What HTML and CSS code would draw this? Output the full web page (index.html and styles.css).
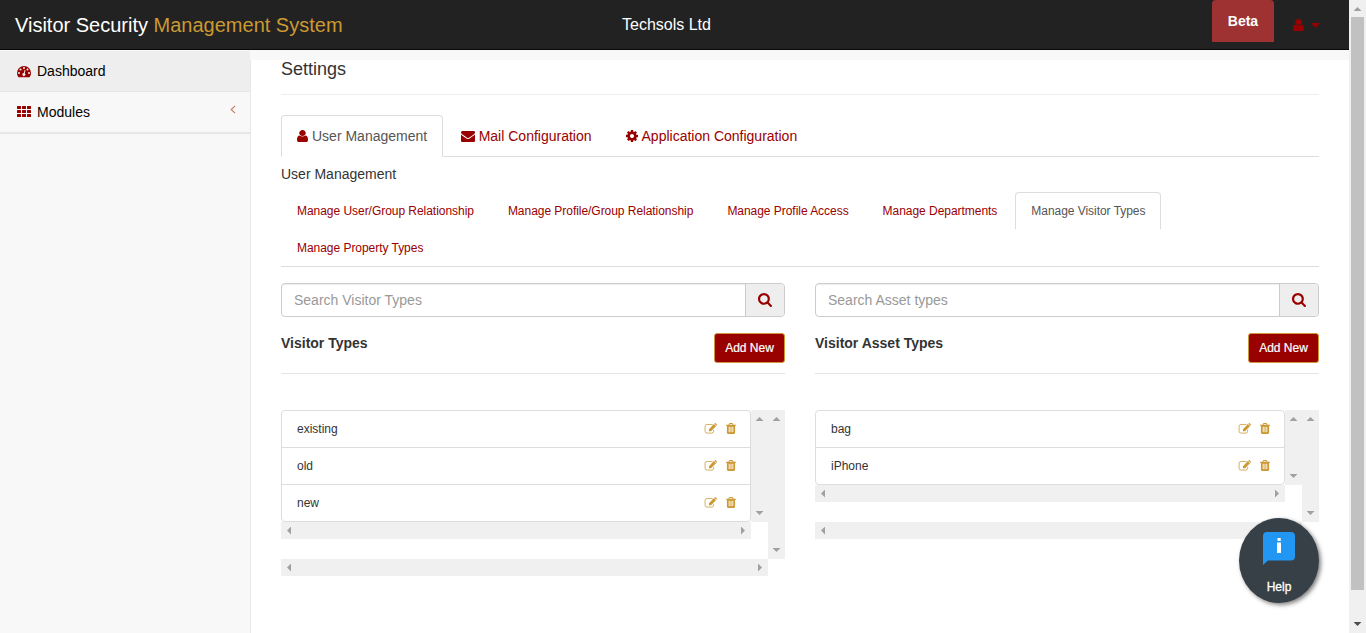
FILE: index.html
```html
<!DOCTYPE html>
<html lang="en">
<head>
<meta charset="utf-8">
<title>Visitor Security Management System</title>
<link rel="stylesheet" href="styles.css">
</head>
<body>
<svg class="defs" aria-hidden="true">
  <symbol id="user" viewBox="256 0 1280 1792" preserveAspectRatio="none"><path d="M1536 1399q0 109-62.5 187t-150.5 78h-854q-88 0-150.5-78t-62.5-187q0-85 8.5-160.5t31.5-152 58.5-131 94-89 134.5-34.5q131 128 313 128t313-128q76 0 134.5 34.5t94 89 58.5 131 31.5 152 8.5 160.5zm-256-887q0 159-112.5 271.5t-271.5 112.5-271.5-112.5-112.5-271.5 112.5-271.5 271.5-112.5 271.5 112.5 112.5 271.5z"/></symbol>
  <symbol id="cog" viewBox="128 0 1536 1792"><path d="M1152 896q0-106-75-181t-181-75-181 75-75 181 75 181 181 75 181-75 75-181zm512-109v222q0 12-8 23t-20 13l-185 28q-19 54-39 91 35 50 107 138 10 12 10 25t-9 23q-27 37-99 108t-94 71q-12 0-26-9l-138-108q-44 23-91 38-16 136-29 186-7 28-36 28h-222q-14 0-24.5-8.5t-11.5-21.5l-28-184q-49-16-90-37l-141 107q-10 9-25 9-14 0-25-11-126-114-165-168-7-10-7-23 0-12 8-23 15-21 51-66.5t54-70.5q-27-50-41-99l-183-27q-13-2-21-12.5t-8-23.5v-222q0-12 8-23t19-13l186-28q14-46 39-92-40-57-107-138-10-12-10-24 0-10 9-23 26-36 98.5-107.5t94.5-71.5q13 0 26 10l138 107q44-23 91-38 16-136 29-186 7-28 36-28h222q14 0 24.5 8.5t11.5 21.5l28 184q49 16 90 37l142-107q9-9 24-9 13 0 25 10 129 119 165 170 7 8 7 22 0 12-8 23-15 21-51 66.5t-54 70.5q26 50 41 98l183 28q13 2 21 12.5t8 23.5z"/></symbol>
  <symbol id="mail" viewBox="0 0 1792 1792"><path d="M1792 710v794q0 66-47 113t-113 47h-1472q-66 0-113-47t-47-113v-794q44 49 101 87 362 246 497 345 57 42 92.5 65.5t94.5 48 110 24.5h2q51 0 110-24.5t94.5-48 92.5-65.5q170-123 498-345 57-39 100-87zm0-294q0 79-49 151t-122 123q-376 261-468 325-10 7-42.5 31t-54 38.5-52 32.5-57.5 27-50 9h-2q-23 0-50-9t-57.5-27-52-32.5-54-38.5-42.5-31q-91-64-262-182.5t-205-142.5q-62-42-117-115.5t-55-136.5q0-78 41.5-130t118.5-52h1472q65 0 112.5 47t47.5 113z"/></symbol>
  <symbol id="search" viewBox="64 128 1664 1664"><path d="M1216 832q0-185-131.5-316.5t-316.5-131.5-316.5 131.5-131.5 316.5 131.5 316.5 316.5 131.5 316.5-131.5 131.5-316.5zm512 832q0 52-38 90t-90 38q-54 0-90-38l-343-342q-179 124-399 124-143 0-273.5-55.5t-225-150-150-225-55.5-273.5 55.5-273.5 150-225 225-150 273.5-55.5 273.5 55.5 225 150 150 225 55.5 273.5q0 220-124 399l343 343q37 37 37 90z"/></symbol>
  <symbol id="trash" viewBox="192 128 1408 1536" preserveAspectRatio="none"><path d="M704 1376v-704q0-14-9-23t-23-9h-64q-14 0-23 9t-9 23v704q0 14 9 23t23 9h64q14 0 23-9t9-23zm256 0v-704q0-14-9-23t-23-9h-64q-14 0-23 9t-9 23v704q0 14 9 23t23 9h64q14 0 23-9t9-23zm256 0v-704q0-14-9-23t-23-9h-64q-14 0-23 9t-9 23v704q0 14 9 23t23 9h64q14 0 23-9t9-23zm-544-992h448l-48-117q-7-9-17-11h-317q-10 2-17 11zm928 32v64q0 14-9 23t-23 9h-96v948q0 83-47 143.5t-113 60.5h-832q-66 0-113-58.5t-47-141.5v-952h-96q-14 0-23-9t-9-23v-64q0-14 9-23t23-9h309l70-167q15-37 54-63t79-26h320q40 0 79 26t54 63l70 167h309q14 0 23 9t9 23z"/></symbol>
  <symbol id="edit" viewBox="0 0 14 12"><path d="M9.2 1.6H3.2Q1.1 1.6 1.1 3.6V9Q1.1 11 3.2 11H8.3Q10.4 11 10.4 9V7.5" fill="none" stroke="currentColor" stroke-width=".85"/><path d="M5.3 9V6.7L10.7 1.2L13 3.5L7.6 9zM11.2.8L11.7.3Q12.2-.1 12.7.3L13.9 1.5Q14.2 2 13.9 2.5L13.4 3z"/></symbol>
  <symbol id="gauge" viewBox="0 0 14 12"><path fill-rule="evenodd" d="M0 7A7 7 0 0 1 14 7Q14 9 12.9 10.8Q12.7 11.2 12.3 11.2H1.7Q1.3 11.2 1.1 10.8Q0 9 0 7zM2 6.1a1 1 0 1 0 0 2a1 1 0 1 0 0-2M3.5 2.6a1 1 0 1 0 0 2a1 1 0 1 0 0-2M7 1a1 1 0 1 0 0 2a1 1 0 1 0 0-2M10.5 2.6a1 1 0 1 0 0 2a1 1 0 1 0 0-2M12 6.1a1 1 0 1 0 0 2a1 1 0 1 0 0-2M7.6 3.9L6.8 7A1.5 1.5 0 1 0 7.8 7.3L8.5 4.2z"/></symbol>
  <symbol id="grid" viewBox="0 0 14 11"><path d="M.5 0h3q.5 0 .5.5v2q0 .5-.5.5h-3q-.5 0-.5-.5v-2q0-.5.5-.5zM5.5 0h3q.5 0 .5.5v2q0 .5-.5.5h-3q-.5 0-.5-.5v-2q0-.5.5-.5zM10.5 0h3q.5 0 .5.5v2q0 .5-.5.5h-3q-.5 0-.5-.5v-2q0-.5.5-.5zM.5 4h3q.5 0 .5.5v2q0 .5-.5.5h-3q-.5 0-.5-.5v-2q0-.5.5-.5zM5.5 4h3q.5 0 .5.5v2q0 .5-.5.5h-3q-.5 0-.5-.5v-2q0-.5.5-.5zM10.5 4h3q.5 0 .5.5v2q0 .5-.5.5h-3q-.5 0-.5-.5v-2q0-.5.5-.5zM.5 8h3q.5 0 .5.5v2q0 .5-.5.5h-3q-.5 0-.5-.5v-2q0-.5.5-.5zM5.5 8h3q.5 0 .5.5v2q0 .5-.5.5h-3q-.5 0-.5-.5v-2q0-.5.5-.5zM10.5 8h3q.5 0 .5.5v2q0 .5-.5.5h-3q-.5 0-.5-.5v-2q0-.5.5-.5z"/></symbol>
</svg>
<div class="window">
  <div class="page">
    <header class="navbar">
      <a class="brand">Visitor Security <span>Management System</span></a>
      <div class="company">Techsols Ltd</div>
      <div class="nav-right">
        <span class="beta">Beta</span>
        <a class="account"><svg class="user-icon"><use href="#user"/></svg><i class="caret"></i></a>
      </div>
    </header>
    <div class="body">
      <nav class="sidebar">
        <a class="side-link active"><svg class="gauge"><use href="#gauge"/></svg>Dashboard</a>
        <a class="side-link"><svg class="grid"><use href="#grid"/></svg>Modules<svg class="chevron" viewBox="0 0 6 9"><path d="M5 .8L1.2 4.5L5 8.2"/></svg></a>
      </nav>
      <main class="content">
        <h4 class="title">Settings</h4>
        <div class="tabs">
          <a class="tab active"><svg class="t-user"><use href="#user"/></svg>User Management</a>
          <a class="tab"><svg class="t-mail"><use href="#mail"/></svg>Mail Configuration</a>
          <a class="tab"><svg class="t-cog"><use href="#cog"/></svg>Application Configuration</a>
        </div>
        <div class="subtitle">User Management</div>
        <div class="subtabs">
          <a class="subtab">Manage User/Group Relationship</a>
          <a class="subtab">Manage Profile/Group Relationship</a>
          <a class="subtab">Manage Profile Access</a>
          <a class="subtab">Manage Departments</a>
          <a class="subtab active">Manage Visitor Types</a>
          <a class="subtab">Manage Property Types</a>
        </div>
        <div class="columns">
          <section class="column">
            <div class="search"><span class="field">Search Visitor Types</span><span class="addon"><svg><use href="#search"/></svg></span></div>
            <div class="heading"><h5>Visitor Types</h5><a class="btn">Add New</a></div>
            <div class="outer">
              <div class="outer-row">
                <div class="inner">
                  <div class="inner-row">
                    <ul class="list">
                      <li>existing<span class="actions"><svg class="edit"><use href="#edit"/></svg><svg class="trash"><use href="#trash"/></svg></span></li>
                      <li>old<span class="actions"><svg class="edit"><use href="#edit"/></svg><svg class="trash"><use href="#trash"/></svg></span></li>
                      <li>new<span class="actions"><svg class="edit"><use href="#edit"/></svg><svg class="trash"><use href="#trash"/></svg></span></li>
                    </ul>
                    <div class="vbar"><i class="up"></i><i class="down"></i></div>
                  </div>
                  <div class="hbar"><i class="left"></i><i class="right"></i></div>
                </div>
                <div class="vbar"><i class="up"></i><i class="down"></i></div>
              </div>
              <div class="hbar"><i class="left"></i><i class="right"></i></div>
            </div>
          </section>
          <section class="column">
            <div class="search"><span class="field">Search Asset types</span><span class="addon"><svg><use href="#search"/></svg></span></div>
            <div class="heading"><h5>Visitor Asset Types</h5><a class="btn">Add New</a></div>
            <div class="outer">
              <div class="outer-row">
                <div class="inner">
                  <div class="inner-row">
                    <ul class="list">
                      <li>bag<span class="actions"><svg class="edit"><use href="#edit"/></svg><svg class="trash"><use href="#trash"/></svg></span></li>
                      <li>iPhone<span class="actions"><svg class="edit"><use href="#edit"/></svg><svg class="trash"><use href="#trash"/></svg></span></li>
                    </ul>
                    <div class="vbar"><i class="up"></i><i class="down"></i></div>
                  </div>
                  <div class="hbar"><i class="left"></i><i class="right"></i></div>
                </div>
                <div class="vbar"><i class="up"></i><i class="down"></i></div>
              </div>
              <div class="hbar"><i class="left"></i><i class="right"></i></div>
            </div>
          </section>
        </div>
      </main>
    </div>
  </div>
  <div class="page-scroll"><i class="up"></i><div class="thumb"></div><i class="down"></i></div>
</div>
<a class="help">
  <svg viewBox="0 0 32 33"><path d="M4 0H28Q32 0 32 4V24.500Q32 28.500 28 28.500H5L0 33V4Q0 0 4 0z" fill="#2196f3"/><path d="M14.500 6h3.200v3h-3.200zM14 10.500h4v10.500h-4z" fill="#fff"/></svg>
  <span>Help</span>
</a>
</body>
</html>
```

FILE: styles.css
```css
* { box-sizing: border-box; }
body {
  margin: 0;
  font: 14px/20px "Liberation Sans", Arial, sans-serif;
  color: #333;
  background: #f8f8f8;
  overflow: hidden;
}
svg { display: block; flex: none; fill: currentColor; }
.defs { display: none; }
h4, h5, ul { margin: 0; padding: 0; font-weight: normal; }
.window { display: flex; height: 633px; }
.page { flex: 1; display: flex; flex-direction: column; }

/* Top bar */
.navbar {
  display: grid;
  grid-template-columns: 622px 1fr auto;
  height: 50px;
  background: #222;
  border-bottom: 1px solid #080808;
  color: #fff;
}
.brand { padding: 15px 0 0 15px; font-size: 20px; }
.brand span { color: #cc9933; }
.company { padding-top: 15px; font-size: 16px; }
.nav-right { display: flex; padding-right: 29px; }
.beta {
  width: 62px;
  height: 42px;
  padding-top: 11px;
  border-radius: 4px 4px 0 0;
  background: #9e3132;
  font-weight: bold;
  text-align: center;
}
.account { display: flex; padding-left: 19px; color: #900; }
.user-icon { width: 11px; height: 14px; margin-top: 18px; }
.caret {
  margin: 23px 0 0 7px;
  width: 9px;
  height: 5px;
  background: #900;
  clip-path: polygon(0 0, 100% 0, 50% 100%);
}

/* Sidebar */
.body { flex: 1; display: flex; }
.sidebar { width: 250px; padding-top: 1px; background: #f8f8f8; }
.side-link {
  display: flex;
  align-items: center;
  height: 41px;
  padding: 0 14px 0 17px;
  border-bottom: 1px solid #e7e7e7;
  color: #000;
}
.side-link:last-child { height: 42px; border-bottom-width: 2px; }
.side-link.active { background: #eee; }
.gauge { width: 14px; height: 12px; margin: 2px 6px 0 0; color: #900; }
.grid { width: 14px; height: 11px; margin: -1px 6px 0 0; color: #900; }
.chevron { width: 6px; height: 9px; margin: -5px 0 0 auto; fill: none; stroke: #c97b63; stroke-width: 1.1; }

/* Content */
.content {
  flex: 1;
  margin-top: 10px;
  padding: 0 30px;
  border-left: 1px solid #e7e7e7;
  background: #fff;
}
.title { height: 35px; border-bottom: 1px solid #eee; font-size: 18px; line-height: 19px; }
.tabs { display: flex; gap: 2px; height: 62px; padding-top: 20px; border-bottom: 1px solid #ddd; }
.tab {
  display: flex;
  align-items: center;
  height: 42px;
  padding: 0 15px;
  border: 1px solid transparent;
  border-radius: 4px 4px 0 0;
  color: #900;
}
.tab.active { border-color: #ddd; border-bottom-color: #fff; background: #fff; color: #555; }
.tab svg { color: #900; }
.t-user { width: 11px; height: 14px; margin-right: 4px; }
.t-mail { width: 14px; height: 14px; margin-right: 3.5px; }
.t-cog { width: 12px; height: 14px; margin-right: 4px; }
.subtitle { height: 35px; padding-top: 7px; }
.subtabs {
  display: flex;
  flex-wrap: wrap;
  height: 75px;
  border-bottom: 1px solid #ddd;
  font-size: 12px;
  letter-spacing: -.04px;
}
.subtab {
  height: 37px;
  margin-right: 2px;
  padding: 8px 15px 0;
  border: 1px solid transparent;
  border-bottom: 0;
  border-radius: 4px 4px 0 0;
  color: #900;
}
.subtab.active { border-color: #ddd; color: #555; }

.columns { display: grid; grid-template-columns: 1fr 1fr; gap: 30px; padding-top: 16px; }
.search { display: flex; height: 34px; border: 1px solid #ccc; border-radius: 4px; overflow: hidden; }
.field { flex: 1; padding: 6px 12px; color: #999; box-shadow: inset 0 1px 1px rgba(0, 0, 0, .075); }
.addon { width: 39px; padding: 9px 12px; border-left: 1px solid #ccc; background: #eee; color: #900; }
.addon svg { width: 14px; height: 14px; }
.heading {
  display: flex;
  justify-content: space-between;
  height: 57px;
  padding-top: 16px;
  border-bottom: 1px solid #e4e4e4;
}
h5 { font-size: 14px; font-weight: bold; }
.btn {
  width: 71px;
  height: 30px;
  border: 1px solid #c93;
  border-radius: 3px;
  background: #900;
  color: #fff;
  font-size: 12px;
  line-height: 28px;
  text-align: center;
  -webkit-text-stroke: .2px #fff;
}

/* Lists with their scroll tracks */
.outer { padding-top: 36px; }
.outer-row, .inner-row { display: flex; }
.inner { flex: 1; padding-bottom: 20px; }
.list {
  flex: 1;
  border: 1px solid #ddd;
  border-radius: 4px;
  font-size: 12px;
  list-style: none;
}
.list li { display: flex; justify-content: space-between; height: 36px; padding: 8px 14px 0 15px; }
.list li + li { height: 37px; border-top: 1px solid #ddd; }
.actions { display: flex; color: #c93; }
.edit { width: 13px; height: 11px; margin: 4px 9px 0 0; }
.trash { width: 10px; height: 11px; margin-top: 4px; }
.vbar, .hbar { display: flex; justify-content: space-between; background: #f0f0f0; }
.vbar { width: 17px; flex-direction: column; align-items: center; padding: 7px 0; }
.hbar { height: 17px; width: calc(100% - 17px); align-items: center; padding: 0 6px; }
.up, .down, .left, .right { background: #a0a0a0; }
.up, .down { width: 8px; height: 4px; }
.left, .right { width: 4px; height: 8px; }
.up { clip-path: polygon(50% 0, 100% 100%, 0 100%); }
.down { clip-path: polygon(0 0, 100% 0, 50% 100%); }
.left { clip-path: polygon(100% 0, 100% 100%, 0 50%); }
.right { clip-path: polygon(0 0, 100% 50%, 0 100%); }

.page-scroll {
  display: flex;
  flex-direction: column;
  align-items: center;
  width: 17px;
  padding: 7px 0;
  background: #f0f0f0;
}
.page-scroll .down { margin-top: auto; background: #505050; }
.thumb { width: 13px; height: 573px; margin-top: 6px; background: #c1c1c1; }

/* Floating help button */
.help {
  position: absolute;
  left: 1239px;
  top: 518px;
  display: flex;
  flex-direction: column;
  align-items: center;
  width: 80px;
  height: 85px;
  padding-top: 14px;
  border-radius: 50%;
  background: #373f47;
  box-shadow: 2px 2px 4px rgba(0, 0, 0, .5);
  color: #fff;
  font-size: 12px;
}
.help svg { width: 32px; height: 33px; }
.help span { margin-top: 12px; -webkit-text-stroke: .3px #fff; }
```
